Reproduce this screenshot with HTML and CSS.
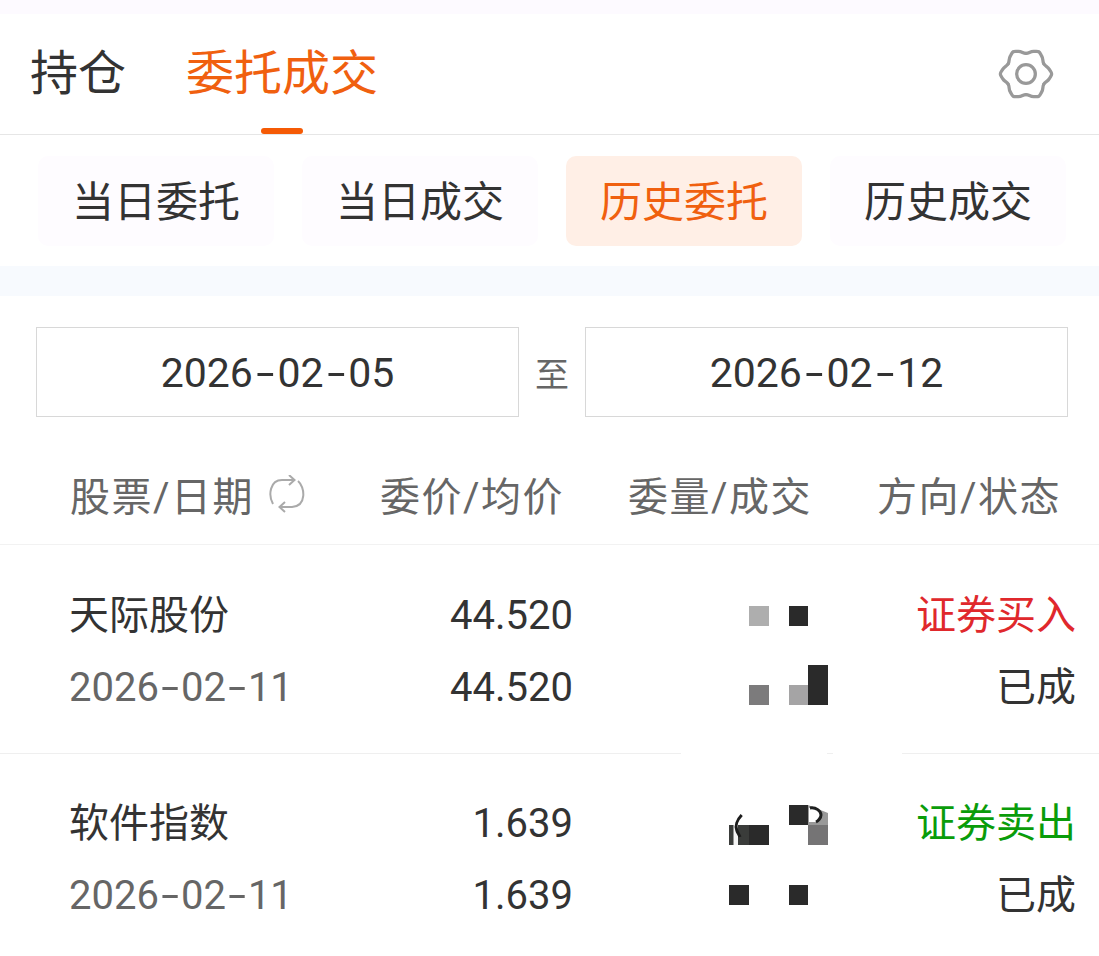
FILE: index.html
```html
<!DOCTYPE html>
<html lang="zh-CN">
<head>
    <meta charset="UTF-8">
    <meta name="viewport" content="width=device-width, initial-scale=1.0">
    <title>委托成交</title>
    <link rel="stylesheet" href="styles.css">
</head>
<body>
<div class="top-strip"></div>

<header class="tabs">
    <div class="tab">持仓</div>
    <div class="tab active">委托成交</div>
    <svg class="gear" viewBox="0 0 60 60" width="56" height="56">
        <g>
            <path d="M49.05 19C50.800 22 53 21.500 55 25C56.500 27.500 57.500 28.500 57.500 30C57.500 31.500 56.500 32.500 55 35C53 38.500 50.800 38 49.05 41"/>
            <path transform="rotate(60 30 30)" d="M49.05 19C50.800 22 53 21.500 55 25C56.500 27.500 57.500 28.500 57.500 30C57.500 31.500 56.500 32.500 55 35C53 38.500 50.800 38 49.05 41"/>
            <path transform="rotate(120 30 30)" d="M49.05 19C50.800 22 53 21.500 55 25C56.500 27.500 57.500 28.500 57.500 30C57.500 31.500 56.500 32.500 55 35C53 38.500 50.800 38 49.05 41"/>
            <path transform="rotate(180 30 30)" d="M49.05 19C50.800 22 53 21.500 55 25C56.500 27.500 57.500 28.500 57.500 30C57.500 31.500 56.500 32.500 55 35C53 38.500 50.800 38 49.05 41"/>
            <path transform="rotate(240 30 30)" d="M49.05 19C50.800 22 53 21.500 55 25C56.500 27.500 57.500 28.500 57.500 30C57.500 31.500 56.500 32.500 55 35C53 38.500 50.800 38 49.05 41"/>
            <path transform="rotate(300 30 30)" d="M49.05 19C50.800 22 53 21.500 55 25C56.500 27.500 57.500 28.500 57.500 30C57.500 31.500 56.500 32.500 55 35C53 38.500 50.800 38 49.05 41"/>
        </g>
        <circle cx="30" cy="30" r="10"/>
    </svg>
</header>

<nav class="sub-tabs">
    <button class="sub-tab">当日委托</button>
    <button class="sub-tab">当日成交</button>
    <button class="sub-tab active">历史委托</button>
    <button class="sub-tab">历史成交</button>
</nav>

<div class="band"></div>

<section class="dates">
    <div class="date-box">2026<span class="dash">-</span>02<span class="dash">-</span>05</div>
    <span class="date-to">至</span>
    <div class="date-box">2026<span class="dash">-</span>02<span class="dash">-</span>12</div>
</section>

<div class="list-head">
    <div class="head-first">
        股票/日期
        <svg class="swap" viewBox="0 0 38 38" width="38" height="38">
            <path d="M4 29C-1 20 1 5 13 5H25M20 0L25.500 5L20 10"/>
            <path d="M29 6C36 12 38 31 23 32H11M16 27L10.500 32L16 37"/>
        </svg>
    </div>
    <div class="head-price">委价/均价</div>
    <div class="head-qty">委量/成交</div>
    <div class="head-state">方向/状态</div>
</div>

<div class="order">
    <div class="order-line">
        <span class="name">天际股份</span>
        <span class="price">44.520</span>
        <div class="pix drop-7">
            <i class="px c2 r2 light"></i>
            <i class="px c4 r2 dark"></i>
        </div>
        <span class="side buy">证券买入</span>
    </div>
    <div class="order-line">
        <span class="day">2026<span class="dash">-</span>02<span class="dash">-</span>11</span>
        <span class="price">44.520</span>
        <div class="pix drop-14">
            <i class="px c2 r2 mid"></i>
            <i class="px c4 r2 pale"></i>
            <i class="px c5 r1 dark"></i>
            <i class="px c5 r2 dark"></i>
        </div>
        <span class="side">已成</span>
    </div>
</div>

<div class="rule">
    <i class="seg seg-a"></i>
    <i class="seg seg-b"></i>
    <i class="seg seg-c"></i>
</div>

<div class="order">
    <div class="order-line">
        <span class="name">软件指数</span>
        <span class="price">1.639</span>
        <div class="pix drop-18">
            <svg class="px c1 r2 frag" viewBox="0 0 20 20">
                <rect width="20" height="20" fill="#3a3c3a"/>
                <rect x="4.500" width="4.500" height="20" fill="#f4f4f4"/>
                <path class="curl" d="M12.700 -10C8 -5 6 1 7.700 5C8.500 8 10 9 11 12"/>
            </svg>
            <i class="px c2 r2 dark"></i>
            <i class="px c4 r1 dark"></i>
            <svg class="px c5 r1 frag" viewBox="0 0 20 20">
                <path d="M0 0L20 8V20H0Z" fill="#999"/>
                <path d="M1 3C8 2 13 6 13 10C13 13 10 16 8 17L1 17Z" fill="#fff"/>
                <path class="arc" d="M2 3C8 2 13 6 13 10C13 13 10 16 8 17"/>
            </svg>
            <i class="px c5 r2 grey"></i>
        </div>
        <span class="side sell">证券卖出</span>
    </div>
    <div class="order-line">
        <span class="day">2026<span class="dash">-</span>02<span class="dash">-</span>11</span>
        <span class="price">1.639</span>
        <div class="pix drop-6">
            <i class="px c1 r2 dark"></i>
            <i class="px c4 r2 dark"></i>
        </div>
        <span class="side">已成</span>
    </div>
</div>
</body>
</html>
```

FILE: styles.css
```css
body {
    font-family: "Roboto", "Noto Sans CJK SC", sans-serif;
    background-color: #fff;
    color: #333;
    margin: 0;
    padding: 0;
    height: 956px;
    overflow: hidden;
}

.top-strip {
    height: 14px;
    background-color: #fdfaff;
}

.tabs {
    display: flex;
    align-items: center;
    height: 120px;
    padding: 0 45px 0 30px;
    border-bottom: 1px solid #e6e6e6;
}

.tab {
    font-size: 48px;
    line-height: 120px;
    margin-right: 60px;
    position: relative;
}

.tab.active {
    color: #f0600f;
}

.tab.active::after {
    content: "";
    position: absolute;
    left: 75px;
    bottom: 0;
    width: 42px;
    height: 6px;
    border-radius: 3px;
    background-color: #f55a05;
}

.gear {
    margin-left: auto;
    overflow: visible;
    fill: none;
    stroke: #999;
    stroke-width: 3.5;
    stroke-linecap: round;
}

.sub-tabs {
    display: flex;
    justify-content: space-between;
    padding: 21px 33px 20px 38px;
}

.sub-tab {
    width: 236px;
    height: 90px;
    padding: 0 0 6px;
    border: none;
    border-radius: 10px;
    background-color: #fefcff;
    color: #333;
    font-family: inherit;
    font-size: 42px;
}

.sub-tab.active {
    background-color: #ffefe6;
    color: #f0600f;
}

.band {
    height: 30px;
    background-color: #f7fafe;
}

.dates {
    display: flex;
    align-items: center;
    padding: 31px 31px 0 36px;
}

.date-box {
    width: 481px;
    height: 88px;
    border: 1px solid #d8d8d8;
    font-size: 41px;
    line-height: 90px;
    text-align: center;
}

.dash {
    display: inline-block;
    width: 0.6em;
    text-align: center;
    transform: scaleX(1.6);
}

.date-to {
    width: 66px;
    text-align: center;
    font-size: 34px;
    color: #666;
}

.list-head {
    display: grid;
    grid-template-columns: 310px 248px 249px 1fr;
    align-items: center;
    height: 101px;
    padding: 26px 0 0 70px;
    border-bottom: 1px solid #f2f2f2;
    font-size: 40px;
    letter-spacing: 1.5px;
    color: #666;
}

.head-first {
    display: flex;
    align-items: center;
    gap: 15px;
}

.swap {
    fill: none;
    stroke: #aaa;
    stroke-width: 2;
}

.order {
    padding: 34px 0 30px;
}

.rule + .order {
    padding-top: 33px;
}

.order-line {
    display: grid;
    grid-template-columns: 281px 223px 255px 248px;
    align-items: center;
    height: 72px;
    padding-left: 69px;
}

.name {
    font-size: 40px;
    padding-bottom: 7px;
}

.day {
    font-size: 40px;
    color: #666;
    white-space: nowrap;
}

.day .dash {
    width: 0.55em;
}

.price {
    font-size: 40px;
    text-align: right;
}

.side {
    font-size: 40px;
    text-align: right;
    padding-bottom: 7px;
}

.buy {
    color: #e0282c;
}

.sell {
    color: #0a9c0a;
}

.pix {
    display: grid;
    grid-template-columns: 20px 20px 20px 19px 20px;
    grid-template-rows: 20px 20px;
    margin-left: 156px;
    align-self: start;
}

.drop-6 { margin-top: 6px; }
.drop-7 { margin-top: 7px; }
.drop-14 { margin-top: 14px; }
.drop-18 { margin-top: 18px; }

.px {
    display: block;
    width: 100%;
    height: 100%;
}

.c1 { grid-column: 1; }
.c2 { grid-column: 2; }
.c4 { grid-column: 4; }
.c5 { grid-column: 5; }
.r1 { grid-row: 1; }
.r2 { grid-row: 2; }

.dark { background-color: #2a2a2a; }
.light { background-color: #aeaeae; }
.mid { background-color: #7c7b7c; }
.pale { background-color: #a5a4a5; }
.grey { background-color: #757475; }

.frag {
    overflow: visible;
}

.curl {
    fill: none;
    stroke: #1c1c1c;
    stroke-width: 3;
}

.arc {
    fill: none;
    stroke: #1f2020;
    stroke-width: 3;
}

.rule {
    display: flex;
    height: 1px;
}

.seg {
    display: block;
    background-color: #efefef;
}

.seg-a {
    width: 681px;
}

.seg-b {
    width: 6px;
    margin-left: 146px;
}

.seg-c {
    flex: 1;
    margin-left: 69px;
}
```
